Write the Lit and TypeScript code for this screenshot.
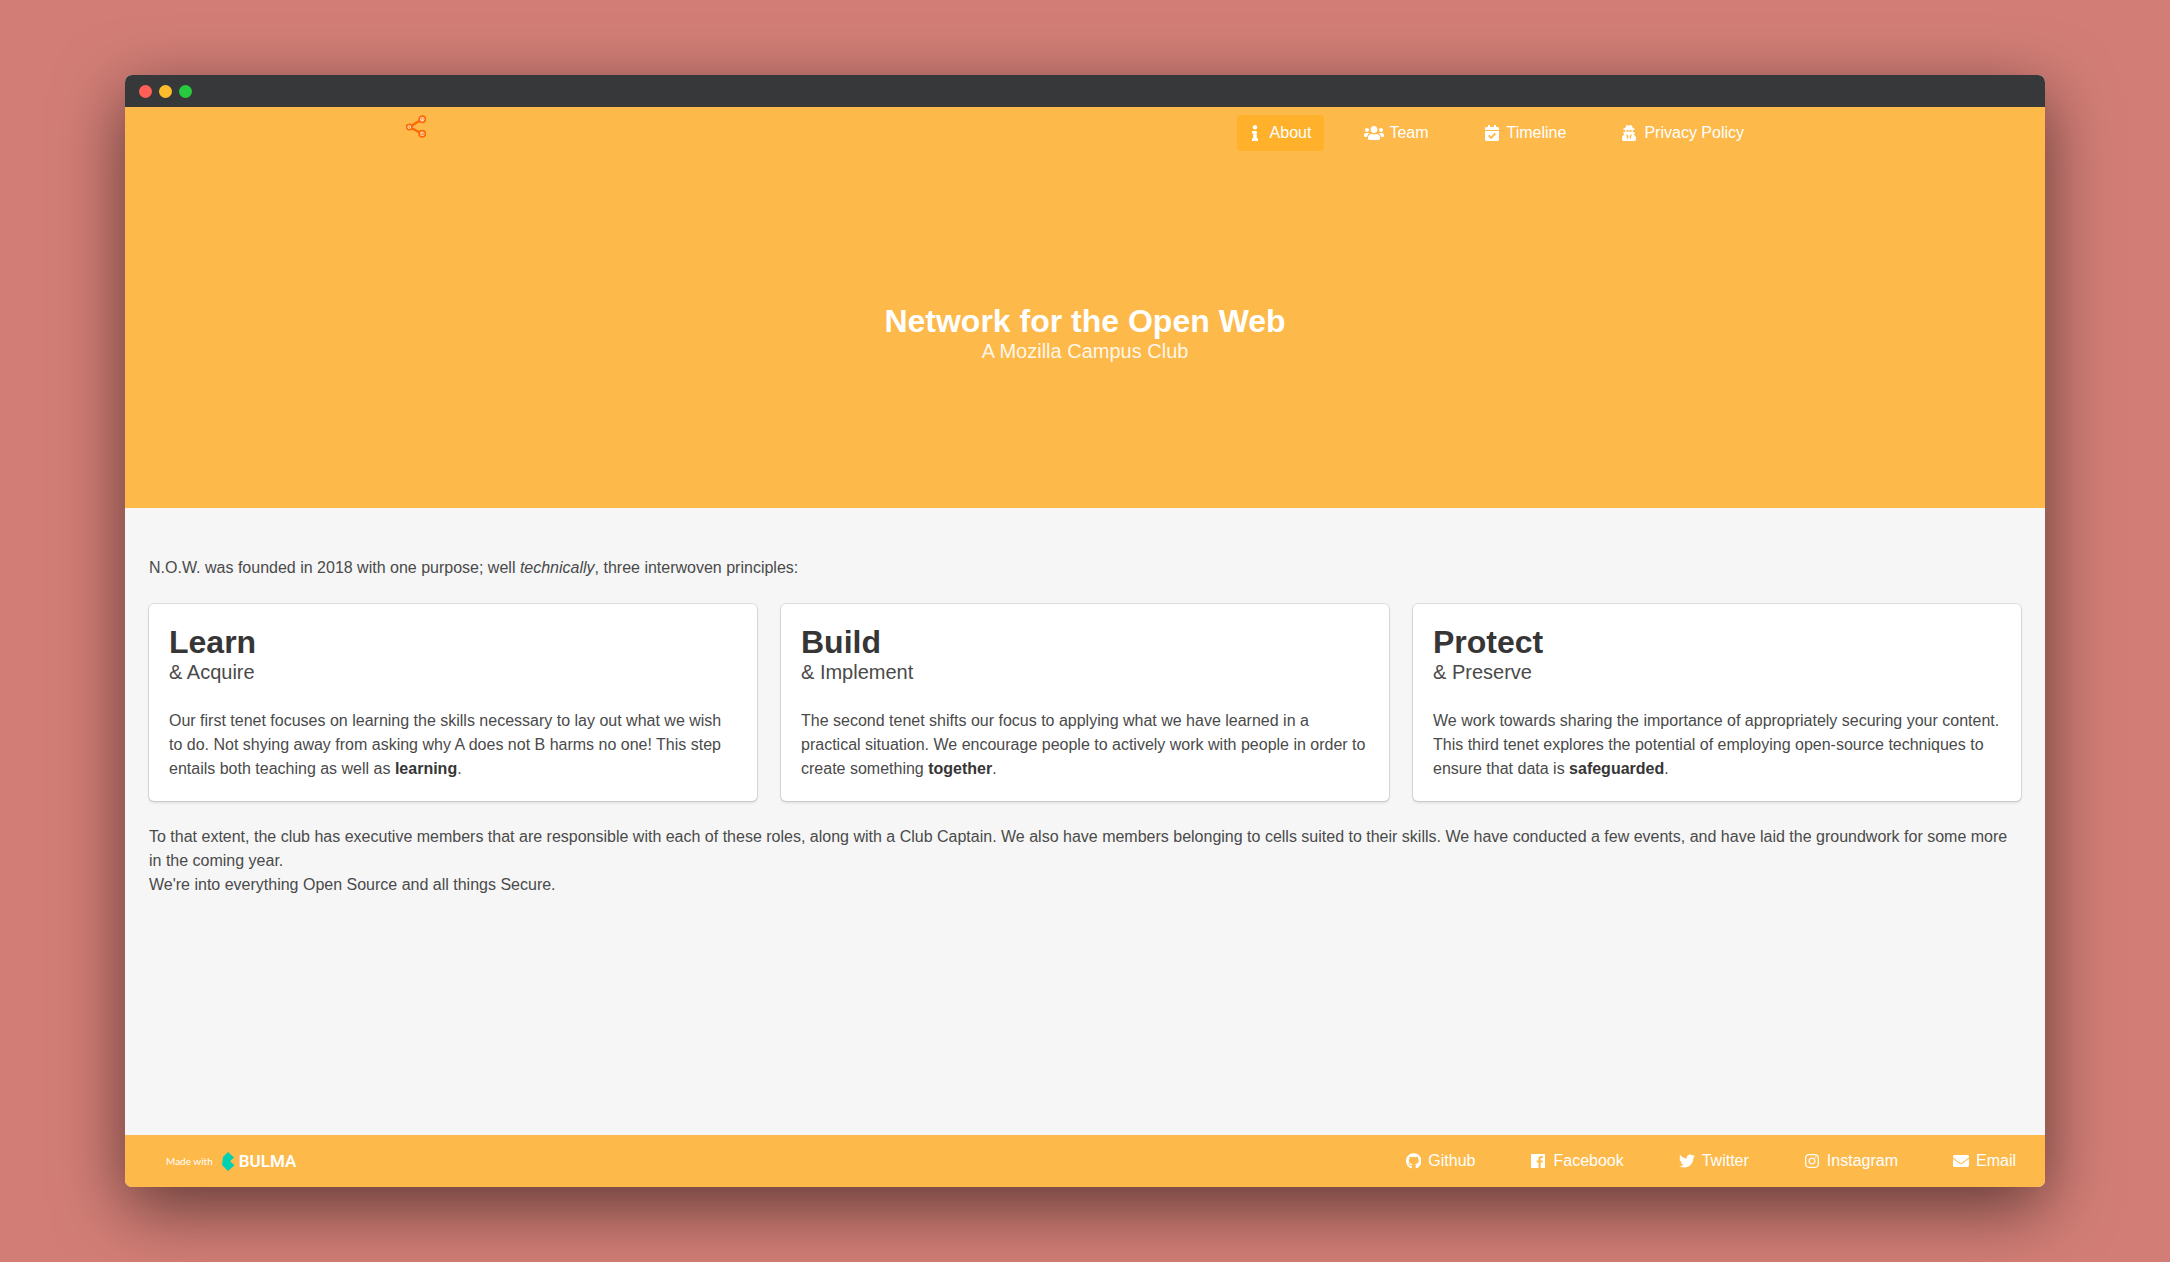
import { LitElement, html, css, svg } from "lit";
import { customElement } from "lit/decorators.js";
import { classMap } from "lit/directives/class-map.js";

interface Glyph {
  width: number;
  path: string;
}

interface NavLink {
  label: string;
  href: string;
  glyph: Glyph;
  active?: boolean;
}

interface Tenet {
  title: string;
  subtitle: string;
  body: string;
  emphasis: string;
}

const glyphs: Record<string, Glyph> = {
  info: {
    width: 192,
    path: "M20 424.229h20V279.771H20c-11.046 0-20-8.954-20-20V212c0-11.046 8.954-20 20-20h112c11.046 0 20 8.954 20 20v212.229h20c11.046 0 20 8.954 20 20V492c0 11.046-8.954 20-20 20H20c-11.046 0-20-8.954-20-20v-47.771c0-11.046 8.954-20 20-20zM96 0C56.235 0 24 32.235 24 72s32.235 72 72 72 72-32.235 72-72S135.764 0 96 0z",
  },
  users: {
    width: 640,
    path: "M96 224c35.3 0 64-28.7 64-64s-28.7-64-64-64-64 28.7-64 64 28.7 64 64 64zm448 0c35.3 0 64-28.7 64-64s-28.7-64-64-64-64 28.7-64 64 28.7 64 64 64zm32 32h-64c-17.6 0-33.5 7.1-45.1 18.6 40.3 22.1 68.9 62 75.1 109.4h66c17.7 0 32-14.3 32-32v-32c0-35.3-28.7-64-64-64zm-256 0c61.9 0 112-50.1 112-112S381.9 32 320 32 208 82.1 208 144s50.1 112 112 112zm76.8 32h-8.3c-20.8 10-43.9 16-68.5 16s-47.6-6-68.5-16h-8.3C179.6 288 128 339.6 128 403.2V432c0 26.5 21.5 48 48 48h288c26.5 0 48-21.5 48-48v-28.8c0-63.6-51.6-115.2-115.2-115.2zm-223.7-13.4C161.5 263.1 145.6 256 128 256H64c-35.3 0-64 28.7-64 64v32c0 17.7 14.3 32 32 32h65.9c6.3-47.4 34.9-87.3 75.2-109.4z",
  },
  calendar: {
    width: 448,
    path: "M436 160H12c-6.627 0-12-5.373-12-12v-36c0-26.51 21.49-48 48-48h48V12c0-6.627 5.373-12 12-12h40c6.627 0 12 5.373 12 12v52h128V12c0-6.627 5.373-12 12-12h40c6.627 0 12 5.373 12 12v52h48c26.51 0 48 21.49 48 48v36c0 6.627-5.373 12-12 12zM12 192h424c6.627 0 12 5.373 12 12v260c0 26.51-21.49 48-48 48H48c-26.51 0-48-21.49-48-48V204c0-6.627 5.373-12 12-12zm333.296 95.947l-28.169-28.398c-4.667-4.705-12.265-4.736-16.97-.068L194.12 364.665l-45.98-46.352c-4.667-4.705-12.266-4.736-16.971-.068l-28.397 28.17c-4.705 4.667-4.736 12.265-.068 16.97l82.601 83.269c4.667 4.705 12.265 4.736 16.97.068l142.953-141.805c4.705-4.667 4.736-12.265.068-16.97z",
  },
  secret: {
    width: 448,
    path: "M383.9 308.3l23.9-62.6c4-10.5-3.7-21.7-15-21.7h-58.5c11-18.9 17.8-40.6 17.8-64v-.3c39.2-7.8 64-19.1 64-31.7 0-13.3-27.3-25.1-70.1-33-9.2-32.8-27-65.8-40.6-82.8-9.5-11.9-25.9-15.6-39.5-8.8l-27.6 13.8c-9 4.5-19.6 4.5-28.6 0L182.1 3.4c-13.6-6.8-30-3.1-39.5 8.8-13.5 17-31.4 50-40.6 82.8-42.7 7.9-70 19.7-70 33 0 12.6 24.8 23.9 64 31.7v.3c0 23.4 6.8 45.1 17.8 64H56.3c-11.5 0-19.2 11.7-14.7 22.3l25.8 60.2C27.3 329.8 0 372.7 0 422.4v44.8C0 491.9 20.1 512 44.8 512h358.4c24.7 0 44.8-20.1 44.8-44.8v-44.8c0-48.4-25.8-90.4-64.1-114.1zM176 480l-41.6-192 49.6 32 24 40-32 120zm96 0l-32-120 24-40 49.6-32L272 480zm41.7-298.5c-3.9 11.9-7 24.6-16.5 33.4-10.1 9.3-48 22.4-64-25-2.8-8.4-15.4-8.4-18.3 0-17 50.2-56 32.4-64 25-9.5-8.8-12.7-21.5-16.5-33.4-.8-2.5-6.3-5.7-6.3-5.8v-10.8c28.3 3.6 61 5.8 96 5.8s67.7-2.1 96-5.8v10.8c-.1.1-5.6 3.2-6.4 5.8z",
  },
  github: {
    width: 496,
    path: "M165.9 397.4c0 2-2.3 3.6-5.2 3.6-3.3.3-5.6-1.3-5.6-3.6 0-2 2.3-3.6 5.2-3.6 3-.3 5.6 1.3 5.6 3.6zm-31.1-4.5c-.7 2 1.3 4.3 4.3 4.9 2.6 1 5.6 0 6.2-2s-1.3-4.3-4.3-5.2c-2.6-.7-5.5.3-6.2 2.3zm44.2-1.7c-2.9.7-4.9 2.6-4.6 4.9.3 2 2.9 3.3 5.9 2.6 2.9-.7 4.9-2.6 4.6-4.6-.3-1.9-3-3.2-5.9-2.9zM244.8 8C106.1 8 0 113.3 0 252c0 110.9 69.8 205.8 169.5 239.2 12.8 2.3 17.3-5.6 17.3-12.1 0-6.2-.3-40.4-.3-61.4 0 0-70 15-84.7-29.8 0 0-11.4-29.1-27.8-36.6 0 0-22.9-15.7 1.6-15.4 0 0 24.9 2 38.6 25.8 21.9 38.6 58.6 27.5 72.9 20.9 2.3-16 8.8-27.1 16-33.7-55.9-6.2-112.3-14.3-112.3-110.5 0-27.5 7.6-41.3 23.6-58.9-2.6-6.5-11.1-33.3 2.6-67.9 20.9-6.5 69 27 69 27 20-5.6 41.5-8.5 62.8-8.5s42.8 2.9 62.8 8.5c0 0 48.1-33.6 69-27 13.7 34.7 5.2 61.4 2.6 67.9 16 17.7 25.8 31.5 25.8 58.9 0 96.5-58.9 104.2-114.8 110.5 9.2 7.9 17 22.9 17 46.4 0 33.7-.3 75.4-.3 83.6 0 6.5 4.6 14.4 17.3 12.1C428.2 457.8 496 362.9 496 252 496 113.3 383.5 8 244.8 8z",
  },
  facebook: {
    width: 448,
    path: "M448 56.7v398.5c0 13.7-11.1 24.7-24.7 24.7H309.1V306.5h58.2l8.7-67.6h-67v-43.2c0-19.6 5.4-32.9 33.5-32.9h35.8v-60.5c-6.2-.8-27.4-2.7-52.2-2.7-51.6 0-87 31.5-87 89.4v49.9h-58.4v67.6h58.4V480H24.7C11.1 480 0 468.9 0 455.3V56.7C0 43.1 11.1 32 24.7 32h398.5c13.7 0 24.8 11.1 24.8 24.7z",
  },
  twitter: {
    width: 512,
    path: "M459.37 151.716c.325 4.548.325 9.097.325 13.645 0 138.72-105.583 298.558-298.558 298.558-59.452 0-114.68-17.219-161.137-47.106 8.447.974 16.568 1.299 25.34 1.299 49.055 0 94.213-16.568 130.274-44.832-46.132-.975-84.792-31.188-98.112-72.772 6.498.974 12.995 1.624 19.818 1.624 9.421 0 18.843-1.3 27.614-3.573-48.081-9.747-84.143-51.98-84.143-102.985v-1.299c13.969 7.797 30.214 12.67 47.431 13.319-28.264-18.843-46.781-51.005-46.781-87.391 0-19.492 5.197-37.36 14.294-52.954 51.655 63.675 129.3 105.258 216.365 109.807-1.624-7.797-2.599-15.918-2.599-24.04 0-57.828 46.782-104.934 104.934-104.934 30.213 0 57.502 12.67 76.67 33.137 23.715-4.548 46.456-13.32 66.599-25.34-7.798 24.366-24.366 44.833-46.132 57.827 21.117-2.273 41.584-8.122 60.426-16.243-14.292 20.791-32.161 39.308-52.628 54.253z",
  },
  instagram: {
    width: 448,
    path: "M224.1 141c-63.6 0-114.9 51.3-114.9 114.9s51.3 114.9 114.9 114.9S339 319.5 339 255.9 287.7 141 224.1 141zm0 189.6c-41.1 0-74.7-33.5-74.7-74.7s33.5-74.7 74.7-74.7 74.7 33.5 74.7 74.7-33.6 74.7-74.7 74.7zm146.4-194.3c0 14.9-12 26.8-26.8 26.8-14.9 0-26.8-12-26.8-26.8s12-26.8 26.8-26.8 26.8 12 26.8 26.8zm76.1 27.2c-1.7-35.9-9.9-67.7-36.2-93.9-26.2-26.2-58-34.4-93.9-36.2-37-2.1-147.9-2.1-184.9 0-35.8 1.7-67.6 9.9-93.9 36.1s-34.4 58-36.2 93.9c-2.1 37-2.1 147.9 0 184.9 1.7 35.9 9.9 67.7 36.2 93.9s58 34.4 93.9 36.2c37 2.1 147.9 2.1 184.9 0 35.9-1.7 67.7-9.9 93.9-36.2 26.2-26.2 34.4-58 36.2-93.9 2.1-37 2.1-147.8 0-184.8zM398.8 388c-7.8 19.6-22.9 34.7-42.6 42.6-29.5 11.7-99.5 9-132.1 9s-102.7 2.6-132.1-9c-19.6-7.8-34.7-22.9-42.6-42.6-11.7-29.5-9-99.5-9-132.1s-2.6-102.7 9-132.1c7.8-19.6 22.9-34.7 42.6-42.6 29.5-11.7 99.5-9 132.1-9s102.7-2.6 132.1 9c19.6 7.8 34.7 22.9 42.6 42.6 11.7 29.5 9 99.5 9 132.1s2.7 102.7-9 132.1z",
  },
  envelope: {
    width: 512,
    path: "M502.3 190.8c3.9-3.1 9.7-.2 9.7 4.7V400c0 26.5-21.5 48-48 48H48c-26.5 0-48-21.5-48-48V195.6c0-5 5.7-7.8 9.7-4.7 22.4 17.4 52.1 39.5 154.1 113.6 21.1 15.4 56.7 47.8 92.2 47.6 35.7.3 72-32.8 92.3-47.6 102-74.1 131.6-96.3 154-113.7zM256 320c23.2.4 56.6-29.2 73.4-41.4 132.7-96.3 142.8-104.7 173.4-128.7 5.8-4.5 9.2-11.5 9.2-18.9v-19c0-26.5-21.5-48-48-48H48c-26.5 0-48 21.5-48 48v19c0 7.4 3.4 14.3 9.2 18.9 30.6 23.9 40.7 32.4 173.4 128.7 16.8 12.2 50.2 41.8 73.4 41.4z",
  },
};

const sections: NavLink[] = [
  { label: "About", href: "#about", glyph: glyphs.info, active: true },
  { label: "Team", href: "#team", glyph: glyphs.users },
  { label: "Timeline", href: "#timeline", glyph: glyphs.calendar },
  { label: "Privacy Policy", href: "#privacy", glyph: glyphs.secret },
];

const socials: NavLink[] = [
  { label: "Github", href: "#github", glyph: glyphs.github },
  { label: "Facebook", href: "#facebook", glyph: glyphs.facebook },
  { label: "Twitter", href: "#twitter", glyph: glyphs.twitter },
  { label: "Instagram", href: "#instagram", glyph: glyphs.instagram },
  { label: "Email", href: "#email", glyph: glyphs.envelope },
];

const tenets: Tenet[] = [
  {
    title: "Learn",
    subtitle: "& Acquire",
    body: "Our first tenet focuses on learning the skills necessary to lay out what we wish to do. Not shying away from asking why A does not B harms no one! This step entails both teaching as well as",
    emphasis: "learning",
  },
  {
    title: "Build",
    subtitle: "& Implement",
    body: "The second tenet shifts our focus to applying what we have learned in a practical situation. We encourage people to actively work with people in order to create something",
    emphasis: "together",
  },
  {
    title: "Protect",
    subtitle: "& Preserve",
    body: "We work towards sharing the importance of appropriately securing your content. This third tenet explores the potential of employing open-source techniques to ensure that data is",
    emphasis: "safeguarded",
  },
];

@customElement("app-root")
export class AppRoot extends LitElement {
  static styles = css`
    :host {
      display: block;
      font-family: "Liberation Sans", Arial, sans-serif;
      font-size: 16px;
      line-height: 24px;
      color: #4a4a4a;
    }
    * {
      box-sizing: border-box;
    }
    h1, h2, p {
      margin: 0;
    }
    .desktop {
      display: flex;
      min-height: 100vh;
      padding: 75px 125px;
      background: #d27e76;
    }
    .window {
      flex: 1;
      min-width: 0;
      display: flex;
      flex-direction: column;
      border-radius: 7px;
      overflow: hidden;
      background: #f6f6f6;
      box-shadow: 0 20px 68px rgba(0, 0, 0, 0.55);
    }
    .titlebar {
      display: flex;
      align-items: center;
      gap: 7px;
      height: 32px;
      padding: 1px 14px 0;
      background: #373839;
    }
    .light {
      width: 13px;
      height: 13px;
      border-radius: 50%;
    }
    .close { background: #ff5f56; }
    .minimise { background: #ffbd2e; }
    .zoom { background: #27c93f; }
    .hero {
      background: #fdb94a;
      color: #fff;
    }
    .navbar {
      display: flex;
      justify-content: space-between;
      max-width: 1358px;
      margin: 0 auto;
      padding: 8px 7px 8px 0;
    }
    .brand {
      display: block;
      height: 28px;
    }
    .brand svg {
      display: block;
    }
    .links {
      display: flex;
      flex-wrap: wrap;
      gap: 32px;
    }
    .button {
      display: flex;
      align-items: center;
      gap: 3px;
      height: 36px;
      padding: 0 13px 0 6px;
      border-radius: 4px;
      color: inherit;
      text-decoration: none;
      white-space: nowrap;
    }
    .button.active {
      background: #ffb12b;
    }
    .icon {
      display: flex;
      align-items: center;
      justify-content: center;
      width: 24px;
      height: 24px;
    }
    .icon svg {
      height: 16px;
      fill: currentColor;
    }
    .hero-body {
      padding: 144px 24px;
      text-align: center;
    }
    .title {
      font-size: 32px;
      line-height: 36px;
      font-weight: 700;
    }
    .subtitle {
      font-size: 20px;
      line-height: 25px;
    }
    .hero .subtitle {
      color: rgba(255, 255, 255, 0.9);
    }
    .content {
      flex: 1;
      display: flex;
      flex-direction: column;
      gap: 24px;
      padding: 48px 24px;
    }
    .tenets {
      display: grid;
      grid-template-columns: repeat(3, 1fr);
      gap: 24px;
    }
    .box {
      padding: 20px;
      border-radius: 5px;
      background: #fff;
      box-shadow: 0 2px 3px rgba(10, 10, 10, 0.1), 0 0 0 1px rgba(10, 10, 10, 0.1);
    }
    .box .title,
    strong {
      color: #363636;
    }
    .box .subtitle {
      margin-bottom: 24px;
    }
    .footer {
      display: flex;
      align-items: center;
      justify-content: space-between;
      padding: 8px 16px 8px 41px;
      background: #fdb94a;
      color: #fff;
    }
    .badge {
      display: flex;
      align-items: center;
      gap: 9px;
      color: inherit;
      text-decoration: none;
    }
    .made {
      font-family: "Lato", "Open Sans", sans-serif;
      font-size: 10px;
    }
    .bulma {
      display: flex;
      align-items: center;
      gap: 4px;
      font-family: "Roboto", sans-serif;
      font-size: 17px;
      font-weight: 600;
    }
  `;

  private renderLink(link: NavLink) {
    return html`
      <a class=${classMap({ button: true, active: !!link.active })} href=${link.href}>
        <span class="icon">
          <svg viewBox="0 0 ${link.glyph.width} 512" aria-hidden="true">
            ${svg`<path d=${link.glyph.path}></path>`}
          </svg>
        </span>
        <span>${link.label}</span>
      </a>
    `;
  }

  private renderTenet(tenet: Tenet) {
    return html`
      <article class="box">
        <h2 class="title">${tenet.title}</h2>
        <p class="subtitle">${tenet.subtitle}</p>
        <p>${tenet.body} <strong>${tenet.emphasis}</strong>.</p>
      </article>
    `;
  }

  render() {
    return html`
      <div class="desktop">
        <div class="window">
          <div class="titlebar">
            <span class="light close"></span>
            <span class="light minimise"></span>
            <span class="light zoom"></span>
          </div>
          <header class="hero">
            <nav class="navbar" aria-label="Main">
              <a class="brand" href="#home" aria-label="Home">
                <svg width="21" height="24" viewBox="0 0 21 24" fill="none" stroke="#fb6a04">
                  <path d="M16.2 4.2 3.3 12 16.2 18.8" stroke-width="2.4" />
                  <g fill="#fff3e0" stroke-width="1.7">
                    <circle cx="16.2" cy="4.2" r="3.1" />
                    <circle cx="3.3" cy="12" r="2.7" />
                    <circle cx="16.2" cy="18.8" r="3.1" />
                  </g>
                  <path d="M15.2 5.6V3.2h2v2.4M14.9 17.4v2.4h2.6v-2.4M16.2 17.4v2.4" stroke-width="0.7" />
                  <circle cx="3.3" cy="12" r="0.6" stroke-width="0.8" />
                </svg>
              </a>
              <div class="links">${sections.map((s) => this.renderLink(s))}</div>
            </nav>
            <div class="hero-body">
              <h1 class="title">Network for the Open Web</h1>
              <p class="subtitle">A Mozilla Campus Club</p>
            </div>
          </header>
          <main class="content">
            <p>
              N.O.W. was founded in 2018 with one purpose; well <em>technically</em>, three
              interwoven principles:
            </p>
            <div class="tenets">${tenets.map((t) => this.renderTenet(t))}</div>
            <p>
              To that extent, the club has executive members that are responsible with each of
              these roles, along with a Club Captain. We also have members belonging to cells
              suited to their skills. We have conducted a few events, and have laid the
              groundwork for some more in the coming year.<br />
              We're into everything Open Source and all things Secure.
            </p>
          </main>
          <footer class="footer">
            <a class="badge" href="#bulma">
              <span class="made">Made with</span>
              <span class="bulma">
                <svg width="13" height="19" viewBox="0 0 13 19" fill="#00d1b2" aria-hidden="true">
                  <path d="M0 13 1 5 6 0 12 5.5 8 9.2 12.5 13.2 6 19Z" />
                </svg>
                <span>BULMA</span>
              </span>
            </a>
            <nav class="links" aria-label="Social">${socials.map((s) => this.renderLink(s))}</nav>
          </footer>
        </div>
      </div>
    `;
  }
}
